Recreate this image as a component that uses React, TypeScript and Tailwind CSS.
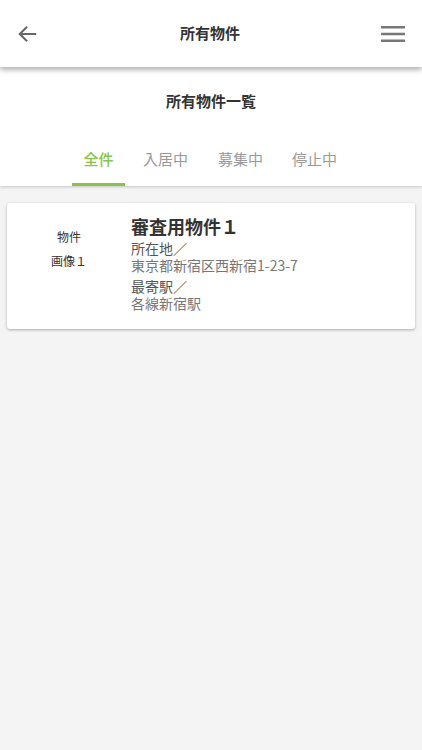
import React from "react";

export default function App() {
  const font = { fontFamily: '"Noto Sans CJK JP", Roboto, "Noto Sans", sans-serif' };
  return (
    <div className="w-[422px] h-[750px] bg-[#f4f4f4] flex flex-col overflow-hidden" style={font}>
      <div className="relative z-10 h-[67px] bg-white flex items-center justify-between px-[17px] shadow-[0_3px_5px_rgba(0,0,0,0.3)]">
        <svg width="22" height="22" viewBox="0 0 24 24" fill="none" stroke="#666" strokeWidth="2.2">
          <path d="M21 12H4M11 4l-8 8 8 8" />
        </svg>
        <div className="text-[15px] font-bold text-[#333]">所有物件</div>
        <svg width="24" height="18" viewBox="0 0 24 18" fill="#777">
          <rect x="0" y="1" width="24" height="2.5" />
          <rect x="0" y="7.75" width="24" height="2.5" />
          <rect x="0" y="14.5" width="24" height="2.5" />
        </svg>
      </div>
      <div className="bg-white flex flex-col shadow-[0_1px_3px_rgba(0,0,0,0.2)]">
        <div className="pt-[22px] text-center text-[15px] font-bold text-[#333] leading-[24px]">所有物件一覧</div>
        <div className="mt-[36px] pl-[72px] flex items-end text-[15px] leading-[20px] whitespace-nowrap">
          <div className="w-[53px] flex flex-col items-center">
            <span className="text-[#8bc34a] font-medium pb-[14px]">全件</span>
            <div className="h-[3px] w-full bg-[#8bc34a]" />
          </div>
          <span className="ml-[18px] text-[#999] pb-[17px]">入居中</span>
          <span className="ml-[30px] text-[#999] pb-[17px]">募集中</span>
          <span className="ml-[29px] text-[#999] pb-[17px]">停止中</span>
        </div>
      </div>
      <div className="mt-[17px] mx-[7px] h-[126px] bg-white rounded-[3px] shadow-[0_1px_3px_rgba(0,0,0,0.3)] flex">
        <div className="w-[124px] flex flex-col items-center pt-[26px] gap-[8px] text-[12px] text-[#333] leading-[16px]">
          <span>物件</span>
          <span>画像１</span>
        </div>
        <div className="flex flex-col pt-[10px]">
          <div className="text-[18px] font-bold text-[#333] leading-[26px]">審査用物件１</div>
          <div className="text-[14px] text-[#555] leading-[17px] mt-[1px]">所在地／</div>
          <div className="text-[14px] text-[#777] leading-[17px]">東京都新宿区西新宿1-23-7</div>
          <div className="text-[14px] text-[#555] leading-[17px] mt-[4px]">最寄駅／</div>
          <div className="text-[14px] text-[#777] leading-[17px]">各線新宿駅</div>
        </div>
      </div>
    </div>
  );
}
